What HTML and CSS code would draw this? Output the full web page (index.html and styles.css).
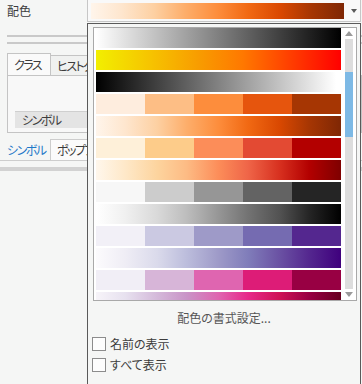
FILE: index.html
```html
<!DOCTYPE html>
<html lang="ja">
<head>
    <meta charset="UTF-8">
    <title>配色</title>
    <link rel="stylesheet" href="styles.css">
</head>
<body>
    <div class="pane">
        <div class="field-row">
            <span class="field-label">配色</span>
            <div class="combo">
                <div class="combo-ramp oranges"></div>
                <span class="caret"></span>
            </div>
        </div>
        <div class="sep first"></div>
        <div class="sep"></div>

        <div class="tab-group">
            <div class="tab-strip">
                <div class="tab active">クラス</div>
                <div class="tab">ヒストグラム</div>
            </div>
            <div class="tab-body">
                <div class="sub-header">シンボル</div>
            </div>
        </div>

        <div class="bottom-tabs">
            <div class="btab current">シンボル</div>
            <div class="btab boxed">ポップアップ</div>
        </div>
        <div class="band"></div>
    </div>

    <!-- 配色のドロップダウン -->
    <div class="dropdown">
        <div class="ramp-list">
            <div class="ramps">
                <div class="ramp grey-black"></div>
                <div class="ramp yellow-red"></div>
                <div class="ramp black-white"></div>
                <div class="ramp classes">
                    <span style="background:#feedde"></span>
                    <span style="background:#fdbe85"></span>
                    <span style="background:#fd8d3c"></span>
                    <span style="background:#e6550d"></span>
                    <span style="background:#a63603"></span>
                </div>
                <div class="ramp oranges"></div>
                <div class="ramp classes">
                    <span style="background:#fef0d9"></span>
                    <span style="background:#fdcc8a"></span>
                    <span style="background:#fc8d59"></span>
                    <span style="background:#e34a33"></span>
                    <span style="background:#b30000"></span>
                </div>
                <div class="ramp orrd"></div>
                <div class="ramp classes">
                    <span style="background:#f7f7f7"></span>
                    <span style="background:#cccccc"></span>
                    <span style="background:#969696"></span>
                    <span style="background:#636363"></span>
                    <span style="background:#252525"></span>
                </div>
                <div class="ramp greys"></div>
                <div class="ramp classes">
                    <span style="background:#f2f0f7"></span>
                    <span style="background:#cbc9e2"></span>
                    <span style="background:#9e9ac8"></span>
                    <span style="background:#756bb1"></span>
                    <span style="background:#54278f"></span>
                </div>
                <div class="ramp purples"></div>
                <div class="ramp classes">
                    <span style="background:#f1eef6"></span>
                    <span style="background:#d7b5d8"></span>
                    <span style="background:#df65b0"></span>
                    <span style="background:#dd1c77"></span>
                    <span style="background:#980043"></span>
                </div>
                <div class="ramp purd"></div>
            </div>
            <div class="scrollbar">
                <div class="sb-btn"><span class="tri up"></span></div>
                <div class="sb-track"><div class="sb-thumb"></div></div>
                <div class="sb-btn"><span class="tri down"></span></div>
            </div>
        </div>

        <div class="format-link">配色の書式設定...</div>

        <label class="check first"><span class="box"></span>名前の表示</label>
        <label class="check"><span class="box"></span>すべて表示</label>
    </div>
</body>
</html>
```

FILE: styles.css
```css
body {
    margin: 0;
    width: 362px;
    height: 384px;
    overflow: hidden;
    position: relative;
    background-color: #f5f6f5;
    font-family: 'Noto Sans CJK JP', 'Noto Sans', sans-serif;
    font-size: 12px;
    font-feature-settings: "palt";
    color: #3c3c3c;
}
.pane {
    height: 100%;
}
.field-row {
    display: flex;
    align-items: center;
    height: 22px;
}
.field-label {
    width: 80px;
    padding-left: 7px;
    line-height: 16px;
}
.combo {
    display: flex;
    align-items: center;
    width: 272px;
    height: 20px;
    border: 1px solid #c6c6c6;
    border-top: none;
    background-color: #f9f9f9;
    padding-top: 1px;
}
.combo-ramp {
    width: 253px;
    height: 16px;
    margin-left: 3px;
}
.caret {
    width: 0;
    height: 0;
    margin-left: 7px;
    border-left: 3px solid transparent;
    border-right: 3px solid transparent;
    border-top: 4px solid #5a5a5a;
}
.sep {
    height: 2px;
    margin: 0 0 5px 7px;
    background-color: #c9c9c9;
}
.sep.first {
    margin-top: 13px;
}
.tab-group {
    margin: 10px 0 0 7px;
}
.tab-strip {
    display: flex;
    align-items: flex-end;
    height: 21px;
}
.tab {
    height: 19px;
    padding: 0 6px;
    line-height: 19px;
    letter-spacing: -1.5px;
    border: 1px solid #c4c4c4;
    border-bottom: none;
    background-color: #f0f1f0;
    white-space: nowrap;
}
.tab.active {
    height: 21px;
    width: 31px;
    padding: 0 5px 0 6px;
    line-height: 21px;
    background-color: #fafafa;
}
.tab.active + .tab {
    border-left: none;
}
.tab-body {
    padding: 35px 0 4px 7px;
    border: 1px solid #c4c4c4;
    background-color: #f8f8f8;
}
.sub-header {
    height: 16px;
    line-height: 16px;
    padding-left: 7px;
    letter-spacing: -1.5px;
    border-top: 1px solid #cfcfcf;
    background-color: #e4e4e4;
}
.bottom-tabs {
    display: flex;
    align-items: flex-end;
    margin-top: 7px;
    height: 20px;
    border-bottom: 1px solid #cdcdcd;
}
.btab {
    height: 20px;
    line-height: 19px;
    letter-spacing: -1.5px;
    white-space: nowrap;
}
.btab.current {
    width: 43px;
    padding-left: 7px;
    color: #1f78c8;
}
.btab.boxed {
    border: 1px solid #cdcdcd;
    border-bottom: none;
    background-color: #fbfbfb;
    padding: 0 6px;
}
.band {
    height: 4px;
    margin-top: 6px;
    background-color: #d2d2d2;
}

/* dropdown */
.dropdown {
    position: absolute;
    left: 87px;
    top: 23px;
    width: 272px;
    height: 370px;
    padding-top: 3px;
    border: 1px solid #5a5a5a;
    background-color: #f5f6f5;
}
.ramp-list {
    display: flex;
    width: 262px;
    height: 272px;
    margin-left: 5px;
    border: 1px solid #a9a9a9;
    background-color: #ffffff;
    overflow: hidden;
}
.ramps {
    width: 245px;
    padding-left: 2px;
    overflow: hidden;
}
.ramp {
    height: 20px;
    margin-bottom: 2px;
}
.ramp.classes {
    display: flex;
}
.ramp.classes span {
    flex: 1;
}
.grey-black {
    background: linear-gradient(to right, #ffffff, #000000);
}
.yellow-red {
    background: linear-gradient(to right, #f2ef00, #f6c400 22%, #f89c00 42%, #ff7800 60%, #ff3c00 80%, #ff0000);
}
.black-white {
    background: linear-gradient(to right, #000000, #ffffff 98%);
}
.oranges {
    background: linear-gradient(to right, #fff5eb, #fee6ce 12%, #fdd0a2 25%, #fdae6b 37%, #fd8d3c 50%, #f16913 62%, #d94801 75%, #a63603 87%, #7f2704);
}
.orrd {
    background: linear-gradient(to right, #fff7ec, #fee8c8 12%, #fdd49e 25%, #fdbb84 37%, #fc8d59 50%, #ef6548 62%, #d7301f 75%, #b30000 87%, #7f0000);
}
.greys {
    background: linear-gradient(to right, #ffffff, #f0f0f0 12%, #d9d9d9 25%, #bdbdbd 37%, #969696 50%, #737373 62%, #525252 75%, #252525 87%, #000000);
}
.purples {
    background: linear-gradient(to right, #fcfbfd, #efedf5 12%, #dadaeb 25%, #bcbddc 37%, #9e9ac8 50%, #807dba 62%, #6a51a3 75%, #54278f 87%, #3f007d);
}
.purd {
    background: linear-gradient(to right, #f7f4f9, #e7e1ef 12%, #d4b9da 25%, #c994c7 37%, #df65b0 50%, #e7298a 62%, #ce1256 75%, #980043 87%, #67001f);
}
.scrollbar {
    display: flex;
    flex-direction: column;
    width: 8px;
    margin-left: 4px;
}
.sb-btn {
    height: 11px;
    display: flex;
    align-items: center;
    justify-content: center;
}
.tri {
    width: 0;
    height: 0;
    border-left: 4px solid transparent;
    border-right: 4px solid transparent;
}
.tri.up {
    border-bottom: 5px solid #9a9a9a;
}
.tri.down {
    border-top: 5px solid #9a9a9a;
}
.sb-track {
    flex: 1;
    background-color: #dddddd;
}
.sb-thumb {
    height: 65px;
    margin-top: 33px;
    background-color: #7db9e5;
}
.format-link {
    margin-top: 9px;
    text-align: center;
    line-height: 16px;
    color: #555555;
}
.check {
    display: flex;
    align-items: center;
    height: 21px;
    margin-left: 4px;
    color: #3c3c3c;
}
.check.first {
    margin-top: 7px;
}
.box {
    width: 12px;
    height: 12px;
    margin-right: 4px;
    border: 1px solid #8c8c8c;
    background-color: #fdfdfd;
}
```
